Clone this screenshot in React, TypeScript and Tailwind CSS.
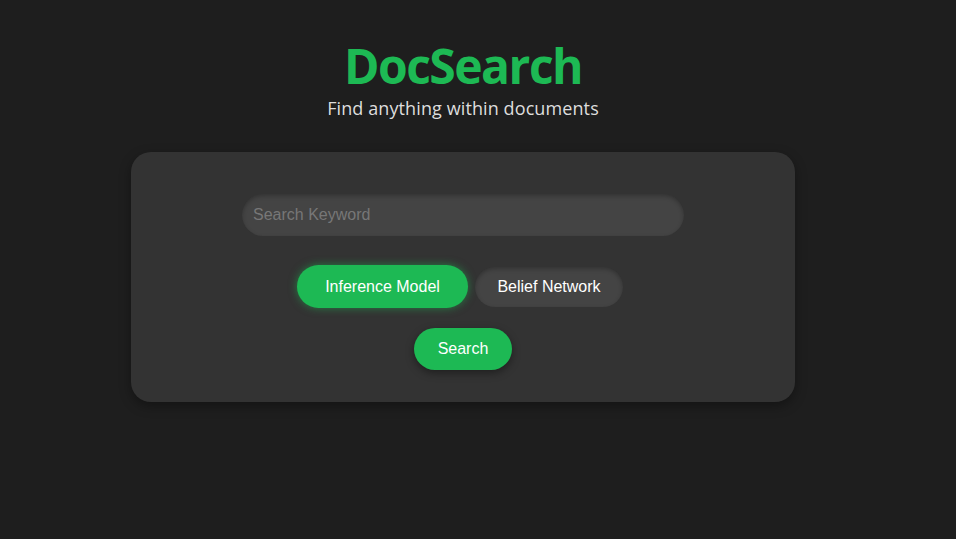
import { useState } from "react";

export default function App() {
  const [mode, setMode] = useState<"inference" | "belief">("inference");

  const pill =
    "rounded-full whitespace-nowrap text-[16px] text-white transition-transform";
  const active = `${pill} w-[171px] h-[43px] bg-[#1db954] shadow-[0_0_8px_rgba(29,185,84,0.55)]`;
  const idle = `${pill} w-[148px] h-[40px] bg-[#444444] shadow-[inset_0_2px_4px_rgba(0,0,0,0.25)]`;

  return (
    <div className="min-h-[539px] w-full bg-[#1e1e1e] flex flex-col items-center pt-[38px] pr-[30px] font-['Liberation_Sans',Arial,sans-serif]">
      <h1 className="font-['Open_Sans',sans-serif] font-bold text-[48px] leading-[56px] text-[#1db954] tracking-[-1.5px]">
        DocSearch
      </h1>
      <p className="font-['Open_Sans',sans-serif] text-[18px] leading-6 text-[#dddddd] mt-[2px] tracking-[0.1px]">
        Find anything within documents
      </p>

      <div className="mt-[32px] w-[664px] h-[250px] rounded-[20px] bg-[#333333] shadow-[0_4px_12px_rgba(0,0,0,0.35)] flex flex-col items-center pt-[42px]">
        <input
          type="text"
          placeholder="Search Keyword"
          className="w-[442px] h-[42px] rounded-full bg-[#444444] px-[11px] text-[16px] text-white placeholder:text-[#777777] outline-none shadow-[inset_0_2px_4px_rgba(0,0,0,0.25)]"
        />

        <div className="mt-[29px] mr-[6px] flex items-center gap-[7px]">
          <button
            onClick={() => setMode("inference")}
            className={mode === "inference" ? active : idle}
          >
            Inference Model
          </button>
          <button
            onClick={() => setMode("belief")}
            className={mode === "belief" ? active : idle}
          >
            Belief Network
          </button>
        </div>

        <button className="mt-[20px] w-[98px] h-[42px] rounded-full bg-[#1db954] text-[16px] text-white shadow-[0_3px_8px_rgba(0,0,0,0.4)]">
          Search
        </button>
      </div>
    </div>
  );
}
